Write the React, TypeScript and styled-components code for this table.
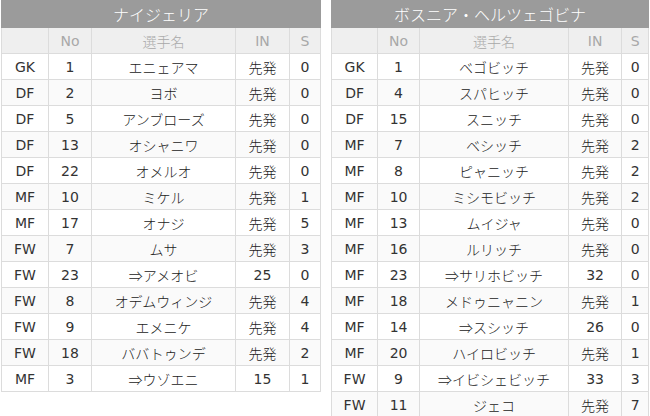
import React from "react";
import styled, { createGlobalStyle } from "styled-components";

const Global = createGlobalStyle`
  html, body { margin: 0; padding: 0; background: #fff; }
  body { font-family: "DejaVu Sans", "Noto Sans CJK JP", sans-serif; }
`;

const Page = styled.div`
  display: flex;
  align-items: flex-start;
  gap: 10px;
  padding: 0 0 0 1px;
`;

const Table = styled.table<{ $w: number }>`
  width: ${(p) => p.$w}px;
  border-collapse: collapse;
  table-layout: fixed;
  font-size: 14px;
  color: #333;
`;

const TitleCell = styled.th`
  height: 26px;
  padding: 0;
  background: #9b9b9b;
  border: 1px solid #9b9b9b;
  color: #fff;
  font-weight: 300;
  font-size: 16px;
  font-family: "Noto Sans CJK JP", sans-serif;
  text-align: center;
`;

const HeadCell = styled.th<{ $jp?: boolean }>`
  height: 25px;
  padding: 0;
  background: #efefef;
  border: 1px solid #dcdcdc;
  color: #a8a8a8;
  font-weight: ${(p) => (p.$jp ? 300 : "normal")};
  font-family: ${(p) => (p.$jp ? '"Noto Sans CJK JP", sans-serif' : "inherit")};
  text-align: center;
`;

const Row = styled.tr<{ $alt: boolean }>`
  background: ${(p) => (p.$alt ? "#fafafa" : "#fff")};
`;

const Cell = styled.td`
  height: 25px;
  padding: 0;
  border: 1px solid #dcdcdc;
  text-align: center;
  white-space: nowrap;
`;

const NameCell = styled(Cell)`
  font-family: "Noto Sans CJK JP", sans-serif;
  font-weight: 300;
  font-size: 14px;
  color: #222;
`;

type P = [string, string, string, string, string];

const nigeria: P[] = [
  ["GK", "1", "エニェアマ", "先発", "0"],
  ["DF", "2", "ヨボ", "先発", "0"],
  ["DF", "5", "アンブローズ", "先発", "0"],
  ["DF", "13", "オシャニワ", "先発", "0"],
  ["DF", "22", "オメルオ", "先発", "0"],
  ["MF", "10", "ミケル", "先発", "1"],
  ["MF", "17", "オナジ", "先発", "5"],
  ["FW", "7", "ムサ", "先発", "3"],
  ["FW", "23", "⇒アメオビ", "25", "0"],
  ["FW", "8", "オデムウィンジ", "先発", "4"],
  ["FW", "9", "エメニケ", "先発", "4"],
  ["FW", "18", "ババトゥンデ", "先発", "2"],
  ["MF", "3", "⇒ウゾエニ", "15", "1"],
];

const bosnia: P[] = [
  ["GK", "1", "ベゴビッチ", "先発", "0"],
  ["DF", "4", "スパヒッチ", "先発", "0"],
  ["DF", "15", "スニッチ", "先発", "0"],
  ["MF", "7", "ベシッチ", "先発", "2"],
  ["MF", "8", "ピャニッチ", "先発", "2"],
  ["MF", "10", "ミシモビッチ", "先発", "2"],
  ["MF", "13", "ムイジャ", "先発", "0"],
  ["MF", "16", "ルリッチ", "先発", "0"],
  ["MF", "23", "⇒サリホビッチ", "32", "0"],
  ["MF", "18", "メドゥニャニン", "先発", "1"],
  ["MF", "14", "⇒スシッチ", "26", "0"],
  ["MF", "20", "ハイロビッチ", "先発", "1"],
  ["FW", "9", "⇒イビシェビッチ", "33", "3"],
  ["FW", "11", "ジェコ", "先発", "7"],
];

function Team({ name, rows, cols }: { name: string; rows: P[]; cols: number[] }) {
  const w = cols.reduce((a, b) => a + b, 0) + 1;
  return (
    <Table $w={w}>
      <colgroup>
        {cols.map((c, i) => (
          <col key={i} style={{ width: c }} />
        ))}
      </colgroup>
      <thead>
        <tr>
          <TitleCell colSpan={5}>{name}</TitleCell>
        </tr>
        <tr>
          <HeadCell></HeadCell>
          <HeadCell>No</HeadCell>
          <HeadCell $jp>選手名</HeadCell>
          <HeadCell>IN</HeadCell>
          <HeadCell>S</HeadCell>
        </tr>
      </thead>
      <tbody>
        {rows.map((r, i) => (
          <Row key={i} $alt={i % 2 === 1}>
            <Cell>{r[0]}</Cell>
            <Cell>{r[1]}</Cell>
            <NameCell>{r[2]}</NameCell>
            {r[3] === "先発" ? <NameCell>{r[3]}</NameCell> : <Cell>{r[3]}</Cell>}
            <Cell>{r[4]}</Cell>
          </Row>
        ))}
      </tbody>
    </Table>
  );
}

export default function App() {
  return (
    <>
      <Global />
      <Page>
        <Team name="ナイジェリア" rows={nigeria} cols={[47, 43, 144, 54, 31]} />
        <Team name="ボスニア・ヘルツェゴビナ" rows={bosnia} cols={[46, 42, 149, 53, 27]} />
      </Page>
    </>
  );
}
